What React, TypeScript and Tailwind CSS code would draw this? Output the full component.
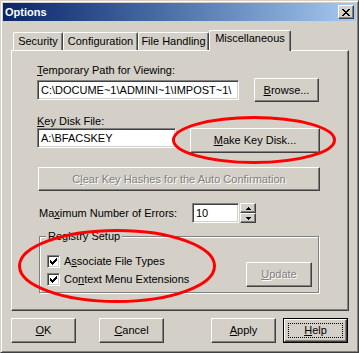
import type { ReactNode } from 'react';

const raised =
  'border border-t-white border-l-white border-r-[#404040] border-b-[#404040] shadow-[inset_-1px_-1px_0_#808080] bg-[#d4d0c8]';
const sunken =
  'border border-t-[#808080] border-l-[#808080] border-r-white border-b-white shadow-[inset_1px_1px_0_#404040,inset_-1px_-1px_0_#d4d0c8] bg-white';
const grayText = 'text-[#808080] [text-shadow:1px_1px_0_#fff]';

function U({ children }: { children: ReactNode }) {
  return <span className="underline">{children}</span>;
}

function Button({
  className = '',
  disabled,
  children,
}: {
  className?: string;
  disabled?: boolean;
  children: ReactNode;
}) {
  return (
    <div
      className={`${raised} flex items-center justify-center whitespace-nowrap ${
        disabled ? grayText : ''
      } ${className}`}
    >
      {children}
    </div>
  );
}

function Check() {
  // classic 7x7 tick, one column at a time
  const cols = [2, 3, 4, 3, 2, 1, 0];
  return (
    <div className={`${sunken} w-[13px] h-[13px] flex items-center justify-center shrink-0`}>
      <svg width="7" height="7" viewBox="0 0 7 7" shapeRendering="crispEdges">
        {cols.map((y, x) => (
          <rect key={x} x={x} y={y} width="1" height="3" fill="#000" />
        ))}
      </svg>
    </div>
  );
}

function Tab({ label, w }: { label: string; w: string }) {
  return (
    <div
      className={`${w} h-[18px] border-t border-l border-r border-t-white border-l-white border-r-[#404040] shadow-[inset_-1px_0_0_#808080] rounded-t-[2px] flex justify-center pt-[2px] whitespace-nowrap`}
    >
      {label}
    </div>
  );
}

export default function App() {
  return (
    <div className="relative w-[359px] h-[353px] bg-[#d4d0c8] border border-t-[#d4d0c8] border-l-[#d4d0c8] border-r-[#404040] border-b-[#404040] shadow-[inset_1px_1px_0_#fff,inset_-1px_-1px_0_#808080] p-[2px] font-['Liberation_Sans',Arial,sans-serif] text-[11px] leading-[13px] text-black">
      {/* title bar */}
      <div className="h-[18px] bg-linear-to-r from-[#0a246a] to-[#a6caf0] flex items-center justify-between pl-[2px] pr-[2px]">
        <span className="text-white font-bold">Options</span>
        <div className={`${raised} w-[16px] h-[14px] flex items-center justify-center`}>
          <svg width="8" height="7" viewBox="0 0 8 7" shapeRendering="crispEdges">
            <path d="M0 0h2v1h-2zM6 0h2v1h-2zM1 1h2v1h-2zM5 1h2v1h-2zM2 2h4v1h-4zM3 3h2v1h-2zM2 4h4v1h-4zM1 5h2v1h-2zM5 5h2v1h-2zM0 6h2v1h-2zM6 6h2v1h-2z" fill="#000" />
          </svg>
        </div>
      </div>

      <div className="pl-[8px]">
        {/* tabs */}
        <div className="mt-[9px] h-[20px] flex items-end pl-[2px]">
          <Tab label="Security" w="w-[50px]" />
          <Tab label="Configuration" w="w-[75px]" />
          <Tab label="File Handling" w="w-[71px]" />
          <div className="relative z-10 w-[82px] h-[21px] -mb-px bg-[#d4d0c8] border-t border-l border-r border-t-white border-l-white border-r-[#404040] shadow-[inset_-1px_0_0_#808080] rounded-t-[2px] flex justify-center pt-[1px]">
            Miscellaneous
          </div>
        </div>

        {/* tab page */}
        <div className="w-[338px] h-[261px] border border-t-white border-l-white border-r-[#404040] border-b-[#404040] shadow-[inset_-1px_-1px_0_#808080] pl-[25px] pt-[13px]">
          <div>
            <U>T</U>emporary Path for Viewing:
          </div>
          <div className="mt-[1px] flex items-center h-[24px]">
            <div className={`${sunken} w-[202px] h-[20px] pl-[3px] flex items-center overflow-hidden whitespace-nowrap`}>
              C:\DOCUME~1\ADMINI~1\IMPOST~1\
            </div>
            <Button className="ml-[15px] w-[65px] h-[24px]">
              <U>B</U>rowse...
            </Button>
          </div>

          <div className="mt-[13px]">
            <U>K</U>ey Disk File:
          </div>
          <div className="flex items-start">
            <div className={`${sunken} w-[139px] h-[20px] pl-[3px] flex items-center whitespace-nowrap`}>
              A:\BFACSKEY
            </div>
            <Button className="ml-[14px] w-[130px] h-[25px]">
              <U>M</U>ake Key Disk...
            </Button>
          </div>

          <Button disabled className="mt-[14px] ml-[1px] w-[282px] h-[24px]">
            C<U>l</U>ear Key Hashes for the Auto Confirmation
          </Button>

          <div className="mt-[12px] flex items-center h-[20px]">
            <div className="ml-[2px] w-[153px]">
              Ma<U>x</U>imum Number of Errors:
            </div>
            <div className={`${sunken} w-[47px] h-[20px] pl-[3px] flex items-center`}>10</div>
            <div className="ml-[1px] flex flex-col">
              <div className={`${raised} w-[16px] h-[10px] flex items-center justify-center`}>
                <svg width="5" height="3" viewBox="0 0 5 3" shapeRendering="crispEdges">
                  <path d="M2 0h1v1h-1zM1 1h3v1h-3zM0 2h5v1h-5z" fill="#000" />
                </svg>
              </div>
              <div className={`${raised} w-[16px] h-[10px] flex items-center justify-center`}>
                <svg width="5" height="3" viewBox="0 0 5 3" shapeRendering="crispEdges">
                  <path d="M0 0h5v1h-5zM1 1h3v1h-3zM2 2h1v1h-1z" fill="#000" />
                </svg>
              </div>
            </div>
          </div>

          {/* registry group */}
          <div className="relative mt-[13px] ml-[2px] w-[280px] h-[57px] border border-[#808080] shadow-[1px_1px_0_#fff,inset_1px_1px_0_#fff] flex justify-between">
            <span className="absolute left-[6px] -top-[7px] px-[2px] bg-[#d4d0c8]">Registry Setup</span>
            <div className="pl-[7px] pt-[18px] flex flex-col gap-[5px]">
              <div className="flex items-center h-[13px]">
                <Check />
                <span className="ml-[4px]">
                  A<U>s</U>sociate File Types
                </span>
              </div>
              <div className="flex items-center h-[13px]">
                <Check />
                <span className="ml-[4px]">
                  Co<U>n</U>text Menu Extensions
                </span>
              </div>
            </div>
            <Button disabled className="mt-[25px] mr-[6px] w-[66px] h-[25px]">
              <U>U</U>pdate
            </Button>
          </div>
        </div>

        {/* dialog buttons */}
        <div className="mt-[7px] flex">
          <Button className="w-[65px] h-[25px]">
            <U>O</U>K
          </Button>
          <Button className="ml-[23px] w-[65px] h-[25px]">
            <U>C</U>ancel
          </Button>
          <Button className="ml-[47px] w-[65px] h-[25px]">
            <U>A</U>pply
          </Button>
          <div className="ml-[7px] w-[65px] h-[25px] border border-black">
            <div className={`${raised} relative w-full h-full flex items-center justify-center`}>
              <div className="absolute inset-[3px] border border-dotted border-black" />
              <span>
                <U>H</U>elp
              </span>
            </div>
          </div>
        </div>
      </div>

      {/* red annotation ellipses */}
      <svg className="absolute left-0 top-0 pointer-events-none" width="359" height="353">
        <ellipse cx="253" cy="139" rx="80.5" ry="22.5" fill="none" stroke="#f00" strokeWidth="3" />
        <ellipse cx="116" cy="265" rx="97.5" ry="35.5" fill="none" stroke="#f00" strokeWidth="3" />
      </svg>
    </div>
  );
}
